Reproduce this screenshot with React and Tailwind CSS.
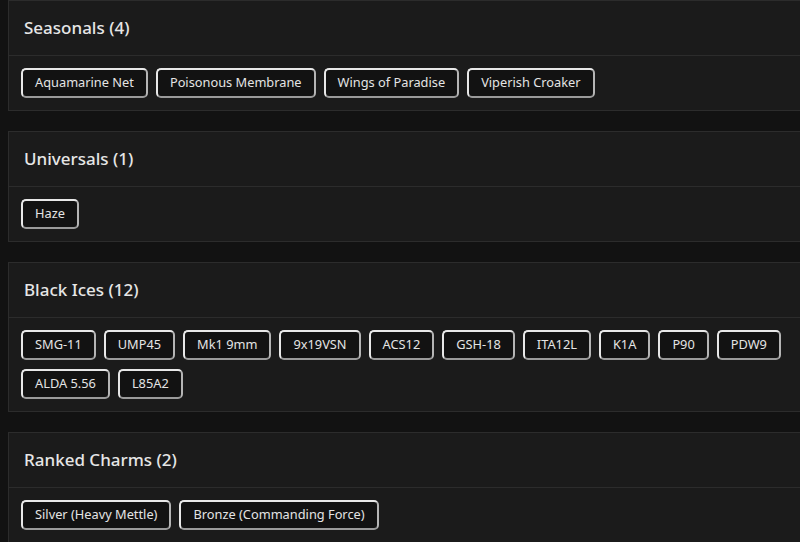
const sections = [
  { title: 'Seasonals', items: ['Aquamarine Net', 'Poisonous Membrane', 'Wings of Paradise', 'Viperish Croaker'] },
  { title: 'Universals', items: ['Haze'] },
  {
    title: 'Black Ices',
    items: ['SMG-11', 'UMP45', 'Mk1 9mm', '9x19VSN', 'ACS12', 'GSH-18', 'ITA12L', 'K1A', 'P90', 'PDW9', 'ALDA 5.56', 'L85A2'],
  },
  { title: 'Ranked Charms', items: ['Silver (Heavy Mettle)', 'Bronze (Commanding Force)'] },
];

function Tag({ label }) {
  return (
    <span className="inline-flex items-center h-[30px] px-3 rounded-[5px] border-2 border-[#e8e8e8] border-b-[#9a9a9a] border-r-[#b5b5b5] bg-[#121212] text-[12.8px] text-[#e4e4e4]">
      {label}
    </span>
  );
}

function Section({ title, items }) {
  return (
    <div className="bg-[#1b1b1b] border border-[#2c2c2c] border-r-0">
      <div className="h-[55px] flex items-center px-[15px] border-b border-[#2c2c2c]">
        <h2 className="text-[17px] font-medium text-[#e6e6e6]">
          {title} ({items.length})
        </h2>
      </div>
      <div className="flex flex-wrap gap-x-2 gap-y-[9px] px-3 py-3">
        {items.map((item) => (
          <Tag key={item} label={item} />
        ))}
      </div>
    </div>
  );
}

export default function App() {
  return (
    <div
      className="w-[800px] h-[542px] overflow-hidden bg-[#121212] pl-2 flex flex-col gap-5"
      style={{ fontFamily: '"Noto Sans", "Open Sans", sans-serif' }}
    >
      {sections.map((s) => (
        <Section key={s.title} {...s} />
      ))}
    </div>
  );
}
